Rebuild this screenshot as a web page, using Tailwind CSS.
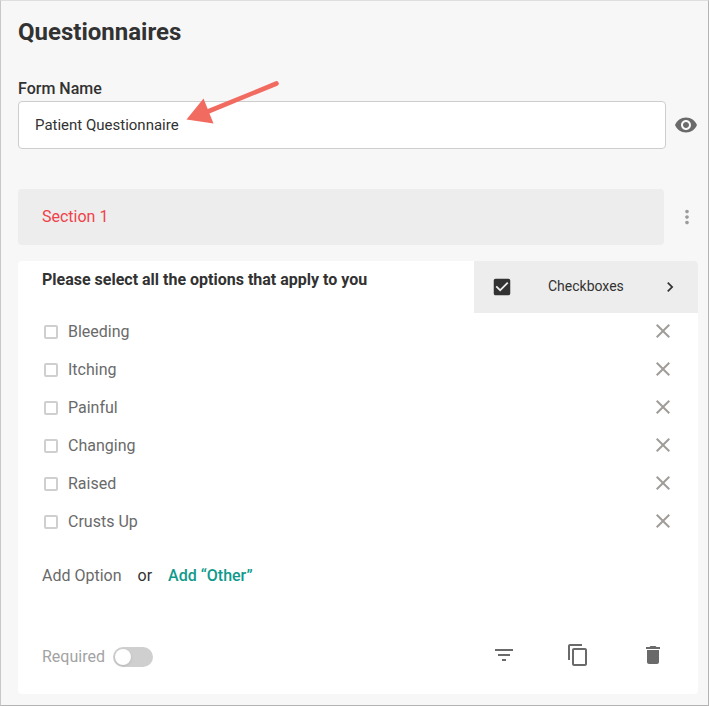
<!DOCTYPE html>
<html lang="en">
<head>
    <meta charset="UTF-8">
    <meta name="viewport" content="width=device-width, initial-scale=1.0">
    <title>Questionnaires</title>
    <script src="https://cdn.jsdelivr.net/npm/@tailwindcss/browser@4"></script>
</head>
<body class="bg-[#f7f7f7] font-[Roboto,sans-serif] text-base text-[#323232]">
    <svg class="hidden">
        <symbol id="close" viewBox="0 0 24 24"><path d="M19 6.41L17.59 5 12 10.59 6.41 5 5 6.41 10.59 12 5 17.59 6.41 19 12 13.41 17.59 19 19 17.59 13.41 12z"/></symbol>
    </svg>
    <div class="relative w-[709px] h-[706px] overflow-hidden border border-[#b4b4b4] border-t-[#dedede] border-l-[#c8c8c8] pl-[17px] pr-2.5">
        <h1 class="mt-[15px] text-2xl leading-8 font-bold">Questionnaires</h1>

        <label for="formName" class="block mt-[29px] h-6 leading-6 font-medium">Form Name</label>
        <div class="flex items-center">
            <input type="text" id="formName" value="Patient Questionnaire" class="w-[648px] h-12 border border-[#cdcdcd] rounded bg-white px-4 text-[15px] outline-none">
            <svg class="ml-2 size-6 shrink-0 fill-[#6a6a6a]" viewBox="0 0 24 24"><path d="M12 4.5C7 4.5 2.73 7.61 1 12c1.73 4.39 6 7.5 11 7.5s9.27-3.11 11-7.5c-1.73-4.39-6-7.5-11-7.5zM12 17c-2.76 0-5-2.24-5-5s2.24-5 5-5 5 2.24 5 5-2.24 5-5 5zm0-8c-1.66 0-3 1.34-3 3s1.34 3 3 3 3-1.34 3-3-1.34-3-3-3z"/></svg>
        </div>

        <div class="flex items-center mt-10">
            <div class="w-[646px] h-14 rounded bg-[#ededed] px-6 leading-[55px] text-[#f0414a]">Section 1</div>
            <svg class="ml-3 mb-px size-[22px] shrink-0 fill-[#9b9b9b]" viewBox="0 0 24 24"><path d="M12 8c1.1 0 2-.9 2-2s-.9-2-2-2-2 .9-2 2 .9 2 2 2zm0 2c-1.1 0-2 .9-2 2s.9 2 2 2 2-.9 2-2-.9-2-2-2zm0 6c-1.1 0-2 .9-2 2s.9 2 2 2 2-.9 2-2-.9-2-2-2z"/></svg>
        </div>

        <div class="mt-4 w-[680px] h-[433px] rounded bg-white overflow-hidden">
            <div class="flex justify-between h-[52px]">
                <h2 class="pl-6 pt-[7px] leading-6 font-bold">Please select all the options that apply to you</h2>
                <div class="flex items-center w-[224px] bg-[#ededed]">
                    <svg class="ml-[17px] size-[22px] fill-[#323232]" viewBox="0 0 24 24"><path d="M19 3H5c-1.11 0-2 .9-2 2v14c0 1.1.89 2 2 2h14c1.11 0 2-.9 2-2V5c0-1.1-.89-2-2-2zm-9 14l-5-5 1.41-1.41L10 14.17l7.59-7.59L19 8l-9 9z"/></svg>
                    <span class="ml-[35px] -mt-0.5 w-[112px] text-sm">Checkboxes</span>
                    <svg class="size-5 fill-[#323232]" viewBox="0 0 24 24"><path d="M10 6L8.59 7.41 13.17 12l-4.58 4.59L10 18l6-6z"/></svg>
                </div>
            </div>

            <ul class="pl-[26px] pr-[23px] text-[#6a6a6a]">
                <li class="flex items-center h-[38px]">
                    <span class="size-3.5 border-2 border-[#cfcfcf] rounded-xs"></span>
                    <span class="ml-2.5 grow">Bleeding</span>
                    <svg class="size-6 mb-0.5 fill-[#a09c99]"><use href="#close"/></svg>
                </li>
                <li class="flex items-center h-[38px]">
                    <span class="size-3.5 border-2 border-[#cfcfcf] rounded-xs"></span>
                    <span class="ml-2.5 grow">Itching</span>
                    <svg class="size-6 mb-0.5 fill-[#a09c99]"><use href="#close"/></svg>
                </li>
                <li class="flex items-center h-[38px]">
                    <span class="size-3.5 border-2 border-[#cfcfcf] rounded-xs"></span>
                    <span class="ml-2.5 grow">Painful</span>
                    <svg class="size-6 mb-0.5 fill-[#a09c99]"><use href="#close"/></svg>
                </li>
                <li class="flex items-center h-[38px]">
                    <span class="size-3.5 border-2 border-[#cfcfcf] rounded-xs"></span>
                    <span class="ml-2.5 grow">Changing</span>
                    <svg class="size-6 mb-0.5 fill-[#a09c99]"><use href="#close"/></svg>
                </li>
                <li class="flex items-center h-[38px]">
                    <span class="size-3.5 border-2 border-[#cfcfcf] rounded-xs"></span>
                    <span class="ml-2.5 grow">Raised</span>
                    <svg class="size-6 mb-0.5 fill-[#a09c99]"><use href="#close"/></svg>
                </li>
                <li class="flex items-center h-[38px]">
                    <span class="size-3.5 border-2 border-[#cfcfcf] rounded-xs"></span>
                    <span class="ml-2.5 grow">Crusts Up</span>
                    <svg class="size-6 mb-0.5 fill-[#a09c99]"><use href="#close"/></svg>
                </li>
            </ul>

            <div class="flex gap-4 mt-[23px] pl-6 leading-6">
                <span class="text-[#6a6a6a]">Add Option</span>
                <span>or</span>
                <span class="font-medium text-[#0f9a8c]">Add “Other”</span>
            </div>

            <div class="flex items-center mt-[55px] pl-6 h-6">
                <span class="mt-1 text-[#a3a3a3]">Required</span>
                <span class="ml-2 mt-1 w-10 h-5 rounded-full bg-[#cfcfcf] p-0.5"><span class="block size-4 rounded-full bg-white shadow-sm"></span></span>
                <div class="flex ml-auto mr-[33px] fill-[#6a6a6a]">
                    <svg class="size-6" viewBox="0 0 24 24"><path d="M10 18h4v-2h-4v2zM3 6v2h18V6H3zm3 7h12v-2H6v2z"/></svg>
                    <svg class="size-6 ml-[50px]" viewBox="0 0 24 24"><path d="M16 1H4c-1.1 0-2 .9-2 2v14h2V3h12V1zm3 4H8c-1.1 0-2 .9-2 2v14c0 1.1.9 2 2 2h11c1.1 0 2-.9 2-2V7c0-1.1-.9-2-2-2zm0 16H8V7h11v14z"/></svg>
                    <svg class="size-6 ml-[51px]" viewBox="0 0 24 24"><path d="M6 19c0 1.1.9 2 2 2h8c1.1 0 2-.9 2-2V7H6v12zM19 4h-3.5l-1-1h-5l-1 1H5v2h14V4z"/></svg>
                </div>
            </div>
        </div>

        <!-- arrow pointing at the form name -->
        <svg class="absolute left-[179px] top-[74px] w-[110px] h-[55px]" viewBox="180 75 110 55">
            <path d="M208 111.500L276.500 83.500" stroke="#f26b61" stroke-width="4.600" stroke-linecap="round"/>
            <path d="M186.500 119.500L203.500 98.500L213.500 123.500z" fill="#f26b61"/>
        </svg>
    </div>
</body>
</html>
